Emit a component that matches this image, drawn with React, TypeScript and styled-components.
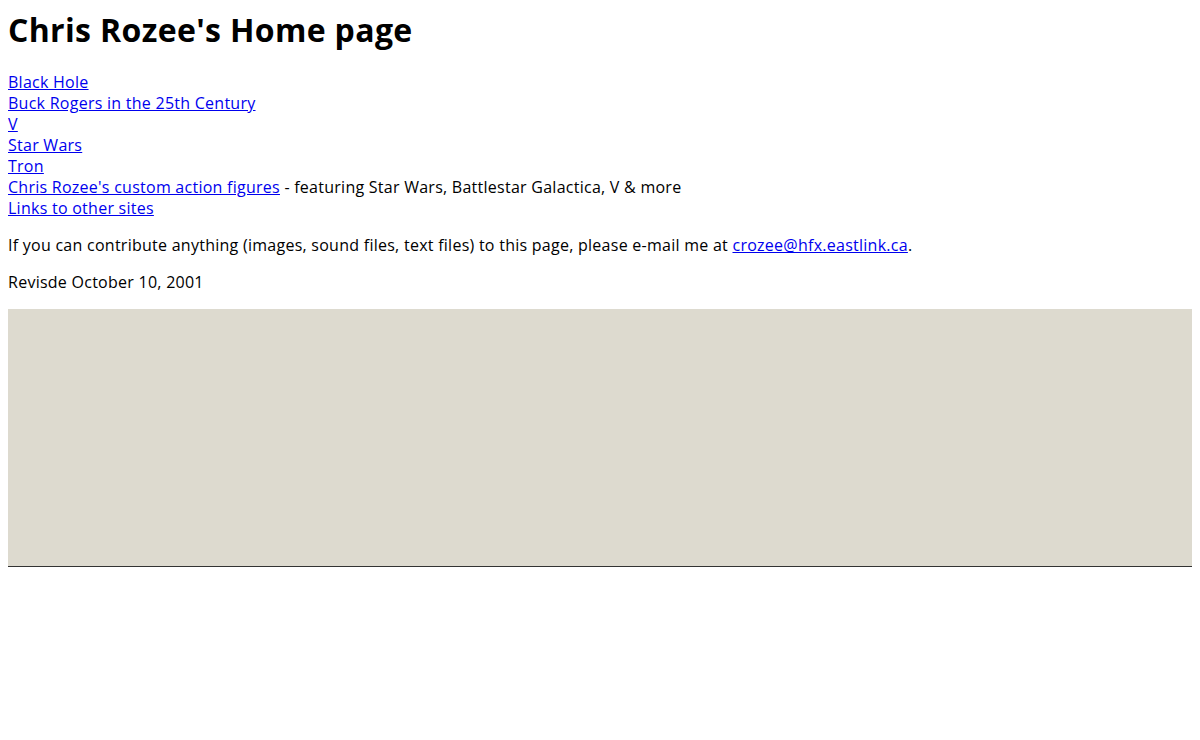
import { FC } from "react";
import styled, { createGlobalStyle } from "styled-components";

const GlobalStyle = createGlobalStyle`
    body {
        margin: 9px 8px 8px;
        background: #ffffff;
        color: #000000;
        font-family: "Open Sans", "Noto Sans", sans-serif;
        font-size: 16px;
        line-height: 21px;
        letter-spacing: 0.26px;
    }
`;

const Title = styled.h1`
    margin: 0 0 21px;
    font-size: 32px;
    line-height: 42px;
    font-weight: 700;
    letter-spacing: 0.35px;
`;

const LinkList = styled.div`
    display: flex;
    flex-direction: column;
`;

const Row = styled.div`
    line-height: 21px;
`;

const Link = styled.a`
    color: #0000ee;
    text-decoration: underline;
`;

const Para = styled.p`
    margin: 16px 0;
`;

const Embed = styled.div`
    height: 257px;
    background: #dddacf;
    border-bottom: 1px solid #333333;
`;

const links = [
    "Black Hole",
    "Buck Rogers in the 25th Century",
    "V",
    "Star Wars",
    "Tron",
];

const App: FC = () => {
    return (
        <>
            <GlobalStyle />
            <Title>Chris Rozee's Home page</Title>
            <LinkList>
                {links.map((l) => (
                    <Row key={l}>
                        <Link href="#">{l}</Link>
                    </Row>
                ))}
                <Row>
                    <Link href="#">Chris Rozee's custom action figures</Link> - featuring Star Wars, Battlestar Galactica, V &amp; more
                </Row>
                <Row>
                    <Link href="#">Links to other sites</Link>
                </Row>
            </LinkList>
            <Para>
                If you can contribute anything (images, sound files, text files) to this page, please e-mail me at{" "}
                <Link href="#">crozee@hfx.eastlink.ca</Link>.
            </Para>
            <Para>Revisde October 10, 2001</Para>
            <Embed />
        </>
    );
};

export default App;
